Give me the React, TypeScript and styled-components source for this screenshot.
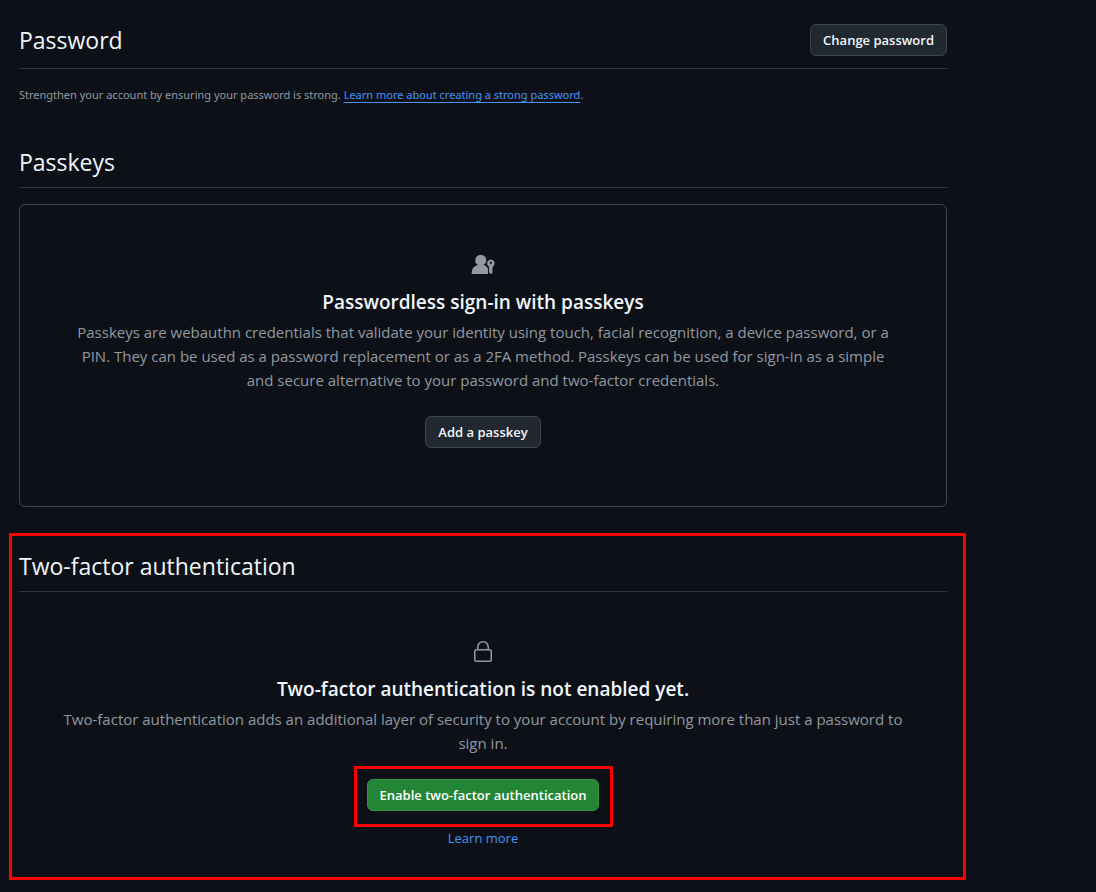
import React from "react";
import styled, { createGlobalStyle } from "styled-components";

const GlobalStyle = createGlobalStyle`
  * { box-sizing: border-box; }
  body {
    margin: 0;
    background: #0d1117;
    color: #f0f6fc;
    font-family: "Segoe UI", "Open Sans", "Noto Sans", sans-serif;
  }
`;

const Page = styled.main`
  padding: 24px 149px 44px 19px;
`;

const Section = styled.section<{ $top?: number }>`
  position: relative;
  margin-top: ${(p) => p.$top ?? 0}px;
`;

const SectionHeader = styled.header<{ $roomy?: boolean }>`
  display: flex;
  align-items: center;
  justify-content: space-between;
  padding-bottom: ${(p) => (p.$roomy ? 12 : 10)}px;
  border-bottom: 1px solid #30363d;
`;

const Heading = styled.h2`
  margin: 0;
  font-size: 23px;
  font-weight: 400;
  line-height: 30px;
`;

const Note = styled.p`
  margin: 17px 0 0;
  color: #9198a1;
  font-family: "Segoe UI", "Noto Sans", sans-serif;
  font-size: 11px;
  line-height: 18px;
`;

const Link = styled.a<{ $underlined?: boolean }>`
  color: #4493f8;
  text-decoration: ${(p) => (p.$underlined ? "underline" : "none")};
  text-underline-offset: 3px;
`;

const Blankslate = styled.div<{ $bordered?: boolean }>`
  display: flex;
  flex-direction: column;
  align-items: center;
  margin-top: ${(p) => (p.$bordered ? 16 : 0)}px;
  padding: ${(p) => (p.$bordered ? "48px 48px 58px" : "48px 32px 0")};
  border: ${(p) => (p.$bordered ? "1px solid #3d444d" : "0")};
  border-radius: 6px;
  text-align: center;
`;

const Icon = styled.svg`
  width: 24px;
  height: 24px;
  fill: #9198a1;
`;

const Title = styled.h3`
  margin: 10px 0 3px;
  font-size: 19px;
  font-weight: 600;
  line-height: 30px;
`;

const Description = styled.p`
  margin: 0 0 24px;
  color: #9198a1;
  font-size: 15px;
  line-height: 24px;
`;

const Button = styled.button<{ $primary?: boolean }>`
  height: 32px;
  padding: 0 12px;
  border: 1px solid ${(p) => (p.$primary ? "#389345" : "#3d444d")};
  border-radius: 6px;
  background: ${(p) => (p.$primary ? "#238636" : "#212830")};
  color: ${(p) => (p.$primary ? "#ffffff" : "#f0f6fc")};
  font-family: inherit;
  font-size: 13px;
  font-weight: 600;
  line-height: 20px;
  white-space: nowrap;
  cursor: pointer;
`;

const Marked = styled.div`
  position: relative;
`;

const Highlight = styled.span<{ $inset: string }>`
  position: absolute;
  inset: ${(p) => p.$inset};
  border: 3px solid #ff0000;
  border-radius: 1px;
  pointer-events: none;
`;

const More = styled.p`
  margin: 17px 0 0;
  font-size: 13px;
  line-height: 20px;
`;

export default function App() {
  return (
    <Page>
      <GlobalStyle />
      <Section>
        <SectionHeader $roomy>
          <Heading>Password</Heading>
          <Button type="button">Change password</Button>
        </SectionHeader>
        <Note>
          Strengthen your account by ensuring your password is strong.{" "}
          <Link href="#strong-password" $underlined>
            Learn more about creating a strong password
          </Link>
          .
        </Note>
      </Section>

      <Section $top={43}>
        <SectionHeader>
          <Heading>Passkeys</Heading>
        </SectionHeader>
        <Blankslate $bordered>
          <Icon viewBox="0 0 24 24" aria-hidden="true">
            <path d="M9.496 2a5.25 5.25 0 0 0-2.519 9.857A9.006 9.006 0 0 0 .5 20.228a.751.751 0 0 0 .728.772h5.257c3.338.001 6.677.002 10.015 0a.5.5 0 0 0 .5-.5v-4.669a.95.95 0 0 0-.171-.551 9.02 9.02 0 0 0-4.314-3.423A5.25 5.25 0 0 0 9.496 2Z" />
            <path d="M23.625 10.313c0 1.31-.672 2.464-1.691 3.134a.398.398 0 0 0-.184.33v.886a.372.372 0 0 1-.11.265l-.534.534a.188.188 0 0 0 0 .265l.534.534c.071.07.11.166.11.265v.347a.374.374 0 0 1-.11.265l-.534.534a.188.188 0 0 0 0 .265l.534.534a.37.37 0 0 1 .11.265v.431a.379.379 0 0 1-.097.253l-1.2 1.319a.781.781 0 0 1-1.156 0l-1.2-1.319a.379.379 0 0 1-.097-.253v-5.39a.398.398 0 0 0-.184-.33 3.75 3.75 0 1 1 5.809-3.134ZM21 9.75a1.125 1.125 0 1 0-2.25 0 1.125 1.125 0 0 0 2.25 0Z" />
          </Icon>
          <Title>Passwordless sign-in with passkeys</Title>
          <Description>
            Passkeys are webauthn credentials that validate your identity using touch, facial
            recognition, a device password, or a PIN. They can be used as a password replacement or
            as a 2FA method. Passkeys can be used for sign-in as a simple and secure alternative to
            your password and two-factor credentials.
          </Description>
          <Button type="button">Add a passkey</Button>
        </Blankslate>
      </Section>

      <Section $top={44}>
        <SectionHeader>
          <Heading>Two-factor authentication</Heading>
        </SectionHeader>
        <Blankslate>
          <Icon viewBox="0 0 24 24" aria-hidden="true">
            <path d="M6 9V7.25C6 3.845 8.503 1 12 1s6 2.845 6 6.25V9h.5a2.5 2.5 0 0 1 2.5 2.5v8a2.5 2.5 0 0 1-2.5 2.5h-13A2.5 2.5 0 0 1 3 19.5v-8A2.5 2.5 0 0 1 5.5 9Zm-1.5 2.5v8a1 1 0 0 0 1 1h13a1 1 0 0 0 1-1v-8a1 1 0 0 0-1-1h-13a1 1 0 0 0-1 1Zm3-4.25V9h9V7.25c0-2.67-1.922-4.75-4.5-4.75-2.578 0-4.5 2.08-4.5 4.75Z" />
          </Icon>
          <Title>Two-factor authentication is not enabled yet.</Title>
          <Description>
            Two-factor authentication adds an additional layer of security to your account by
            requiring more than just a password to sign in.
          </Description>
          <Marked>
            <Button type="button" $primary>
              Enable two-factor authentication
            </Button>
            <Highlight $inset="-13px -14px -16px -13px" />
          </Marked>
          <More>
            <Link href="#two-factor">Learn more</Link>
          </More>
        </Blankslate>
        <Highlight $inset="-18px -19px -32px -10px" />
      </Section>
    </Page>
  );
}
